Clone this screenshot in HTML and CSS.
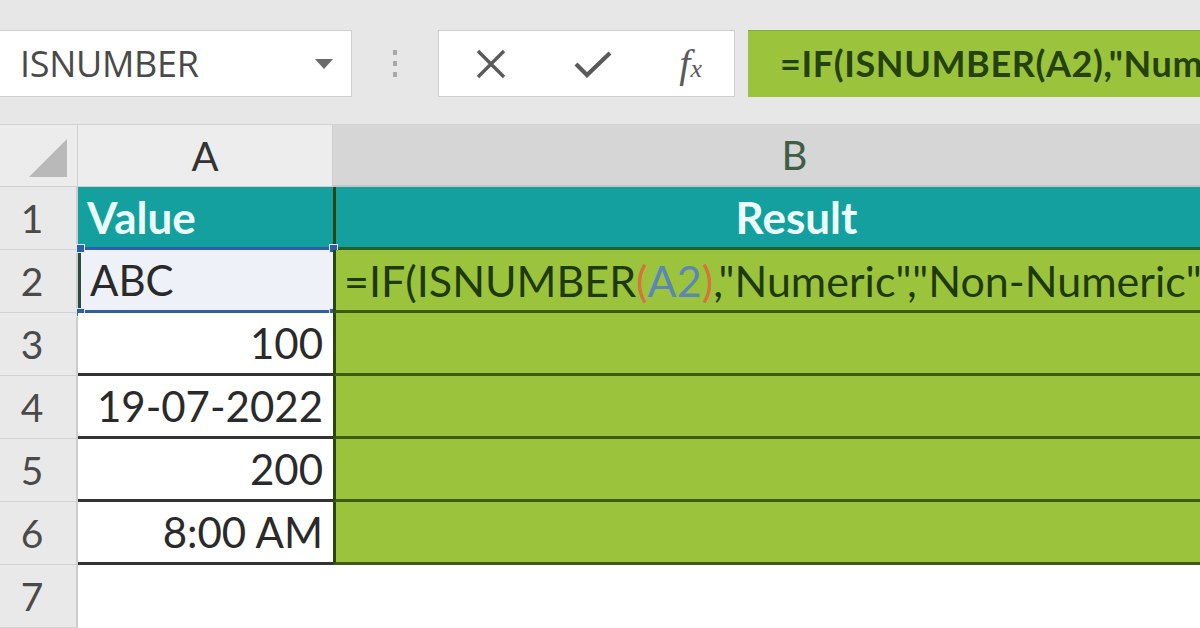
FILE: index.html
```html
<!DOCTYPE html>
<html>
<head>
<meta charset="utf-8">
<link rel="stylesheet" href="styles.css">
</head>
<body>
<div class="app">
  <div class="toolbar">
    <div class="namebox">
      <span class="name">ISNUMBER</span>
      <span class="caret"></span>
    </div>
    <div class="grip"><i></i><i></i><i></i></div>
    <div class="fxbtns">
      <svg class="ico" width="32" height="32" viewBox="0 0 32 32"><path d="M3 3 L29 29 M29 3 L3 29" stroke="#5a5a5a" stroke-width="3.4" fill="none"/></svg>
      <svg class="ico" width="40" height="34" viewBox="0 0 40 34"><path d="M3 17 L14 28 L37 6" stroke="#5a5a5a" stroke-width="4.2" fill="none"/></svg>
      <span class="fx">f<small>x</small></span>
    </div>
    <div class="formula">=IF(ISNUMBER(A2),"Numeric","Non-Numeric")</div>
  </div>
  <div class="sheet">
    <div class="corner"><span class="tri"></span></div>
    <div class="colhead">A</div>
    <div class="colhead selcol">B</div>

    <div class="rowhead">1</div>
    <div class="cell teal left">Value</div>
    <div class="cell teal bcell center">Result</div>

    <div class="rowhead sel">2</div>
    <div class="cell active left">ABC<span class="h tl"></span><span class="h tr"></span><span class="h br"></span><span class="h bl"></span></div>
    <div class="cell green bcell formulacell">=IF(ISNUMBER<span class="paren">(</span><span class="ref">A2</span><span class="paren">)</span>,"Numeric","Non-Numeric")</div>

    <div class="rowhead">3</div>
    <div class="cell val">100</div>
    <div class="cell green bcell"></div>

    <div class="rowhead">4</div>
    <div class="cell val">19-07-2022</div>
    <div class="cell green bcell"></div>

    <div class="rowhead">5</div>
    <div class="cell val">200</div>
    <div class="cell green bcell"></div>

    <div class="rowhead">6</div>
    <div class="cell val">8:00 AM</div>
    <div class="cell green bcell"></div>

    <div class="rowhead">7</div>
    <div class="cell blank"></div>
    <div class="cell blank"></div>
  </div>
</div>
</body>
</html>
```
FILE: styles.css
```css
* { box-sizing: border-box; }
html, body { margin: 0; padding: 0; }
body {
  width: 1200px;
  height: 628px;
  overflow: hidden;
  background: #ffffff;
  font-family: "Lato", "Open Sans", sans-serif;
}
.app { width: 1200px; height: 628px; overflow: hidden; }

.toolbar {
  height: 125px;
  background: #e7e7e7;
  display: flex;
  align-items: flex-start;
  padding-top: 30px;
  border-bottom: 1px solid #d2d2d2;
}
.namebox {
  width: 352px;
  height: 67px;
  background: #fff;
  border: 1px solid #d0d0d0;
  border-left: none;
  display: flex;
  align-items: center;
  justify-content: space-between;
  padding: 0 18px 0 20px;
}
.name {
  font-family: "Open Sans", sans-serif;
  font-size: 36px;
  color: #4a4a4a;
  letter-spacing: -0.3px;
}
.caret {
  width: 0; height: 0;
  border-left: 9px solid transparent;
  border-right: 9px solid transparent;
  border-top: 10px solid #6a6a6a;
}
.grip {
  width: 86px;
  height: 67px;
  display: flex;
  flex-direction: column;
  align-items: center;
  justify-content: center;
  gap: 6px;
}
.grip i { display: block; width: 4px; height: 5px; background: #a8a8a8; }
.fxbtns {
  width: 297px;
  height: 67px;
  background: #fff;
  border: 1px solid #d0d0d0;
  display: flex;
  align-items: center;
  justify-content: space-between;
  padding: 0 32px 0 36px;
}
.fx {
  font-family: "Liberation Serif", serif;
  font-style: italic;
  font-size: 40px;
  color: #5a5a5a;
  line-height: 1;
}
.fx small { font-size: 26px; }
.formula {
  margin-left: 13px;
  flex: 1;
  height: 67px;
  background: #9bc43c;
  border-top: 1px solid #86ad2f;
  color: #25420d;
  font-size: 36px;
  font-weight: bold;
  letter-spacing: 0.6px;
  line-height: 64px;
  padding-left: 32px;
  white-space: nowrap;
  overflow: hidden;
}

.sheet {
  display: grid;
  grid-template-columns: 78px 255px 924px;
  grid-template-rows: 62px repeat(7, 63px);
}
.corner {
  background: #ececec;
  border-right: 1px solid #d0d0d0;
  border-bottom: 1px solid #d0d0d0;
  display: flex;
  align-items: flex-end;
  justify-content: flex-end;
  padding: 0 10px 9px 0;
}
.tri {
  width: 0; height: 0;
  border-left: 38px solid transparent;
  border-bottom: 38px solid #b9b9b9;
}
.colhead {
  background: #ededed;
  border-right: 1px solid #d0d0d0;
  border-bottom: 1px solid #d0d0d0;
  display: flex;
  align-items: center;
  justify-content: center;
  font-size: 40px;
  color: #333;
}
.colhead.selcol { background: #d6d6d6; color: #3f5e45; border-bottom: 2px solid #c4c4c4; }
.rowhead {
  background: #e9e9e9;
  border-right: 2px solid #cdcdcd;
  border-bottom: 1px solid #d3d3d3;
  display: flex;
  align-items: center;
  justify-content: center;
  font-size: 39px;
  color: #4a4a4a;
  padding-right: 12px;
}
.cell {
  position: relative;
  display: flex;
  align-items: center;
  font-size: 42px;
  color: #2a2a2a;
  white-space: nowrap;
  overflow: visible;
}
.left { padding-left: 9px; }
.center { justify-content: center; }
.teal {
  background: #13a09f;
  color: #ecfcfb;
  font-weight: bold;
  font-size: 44px;
}
.teal.left { border-bottom: 3px solid #2c5fa6; }
.teal.bcell { border-bottom: 3px solid #24602a; }
.bcell { border-left: 3px solid #2a4412; }
.green {
  background: #9bc43c;
  border-bottom: 3px solid #3e5a16;
}
.formulacell {
  color: #1f3a0a;
  padding-left: 8px;
  overflow: hidden;
  font-size: 43px;
}
.formulacell .paren { color: #d2763c; }
.formulacell .ref { color: #5b86b8; }
.active {
  background: #eef2f8;
  border-left: 3px solid #2b4b3e;
  border-bottom: 3px solid #2c5fa6;
}
.h {
  position: absolute;
  width: 9px; height: 9px;
  background: #2c5fa6;
  border: 1px solid #dce8f6;
}
.h.tl { left: -5px; top: -6px; }
.h.tr { right: -5px; top: -6px; }
.h.br { right: -5px; bottom: -7px; }
.h.bl { left: -5px; bottom: -7px; }
.val {
  background: #fff;
  justify-content: flex-end;
  padding-right: 10px;
  border-bottom: 3px solid #333;
}
.blank { background: #fff; }
```
